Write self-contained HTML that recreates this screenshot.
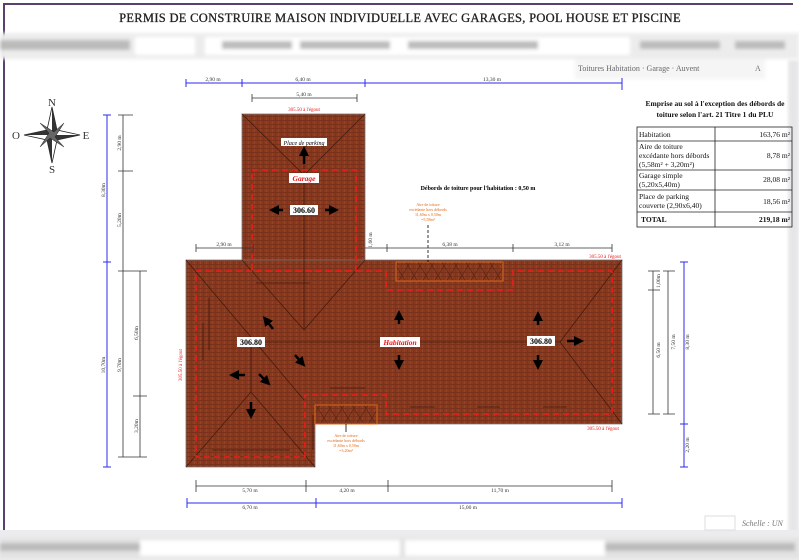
<!DOCTYPE html>
<html><head><meta charset="utf-8">
<style>
html,body{margin:0;padding:0;background:#fff;}
body{width:799px;height:560px;overflow:hidden;position:relative;font-family:"Liberation Serif",serif;}
svg{position:absolute;left:0;top:0;}
</style></head>
<body>
<svg width="799" height="560" viewBox="0 0 799 560" xmlns="http://www.w3.org/2000/svg" font-family="Liberation Serif, serif">
<defs>
<pattern id="tile" width="6" height="4" patternUnits="userSpaceOnUse">
<rect width="6" height="4" fill="#8a391d"/>
<rect x="0" y="0" width="6" height="0.8" fill="#73301a"/>
<rect x="2" y="1" width="0.8" height="3" fill="#98442a"/>
<rect x="5" y="1" width="0.8" height="3" fill="#7a331b"/>
</pattern>
<pattern id="hatch" width="12" height="19" patternUnits="userSpaceOnUse">
<path d="M0 0 L12 19 M12 0 L0 19" stroke="#5a2412" stroke-width="0.7"/>
</pattern>
<marker id="ah" markerWidth="4" markerHeight="4" refX="2" refY="2" orient="auto" markerUnits="strokeWidth">
<path d="M0 0 L4 2 L0 4 Z" fill="#000"/></marker>
<filter id="bl"><feGaussianBlur stdDeviation="1.8"/></filter>
</defs>

<rect x="0" y="0" width="799" height="560" fill="#fff"/>
<rect x="3" y="3" width="2" height="527" fill="#5d3f6e"/>
<rect x="3" y="3" width="790" height="2" fill="#5d3f6e"/>
<rect x="788" y="60" width="11" height="500" fill="#e6e6e8" filter="url(#bl)"/>
<rect x="0" y="530" width="799" height="30" fill="#ececee"/>

<text x="400" y="22" text-anchor="middle" font-size="12.5" fill="#222" stroke="#222" stroke-width="0.3" letter-spacing="0.3">PERMIS DE CONSTRUIRE MAISON INDIVIDUELLE AVEC GARAGES, POOL HOUSE ET PISCINE</text>

<g filter="url(#bl)">
<rect x="0" y="33" width="799" height="26" fill="#ececec"/>
<rect x="135" y="37" width="60" height="18" fill="#fff"/>
<rect x="205" y="37" width="365" height="18" fill="#fff"/>
<rect x="570" y="37" width="60" height="18" fill="#fff"/>
<rect x="0" y="40" width="130" height="10" fill="#bbb"/>
<rect x="222" y="41" width="70" height="8" fill="#bbb"/>
<rect x="300" y="41" width="90" height="8" fill="#bbb"/>
<rect x="408" y="41" width="130" height="8" fill="#bbb"/>
<rect x="640" y="41" width="80" height="8" fill="#bbb"/>
<rect x="735" y="41" width="50" height="8" fill="#bbb"/>
<rect x="575" y="59" width="190" height="20" fill="#f5f5f5"/>
<rect x="0" y="538" width="799" height="20" fill="#e2e2e2"/>
<rect x="140" y="540" width="260" height="16" fill="#fff"/>
<rect x="405" y="540" width="200" height="16" fill="#fff"/>
<rect x="0" y="543" width="140" height="8" fill="#bbb"/>
<rect x="605" y="543" width="190" height="8" fill="#bbb"/>
</g>
<text x="578" y="71" font-size="8" fill="#444" opacity="0.8">Toitures Habitation · Garage · Auvent</text>
<text x="755" y="71" font-size="8" fill="#777">A</text>
<text x="742" y="526" font-size="8" fill="#555" font-style="italic" opacity="0.8">Schelle : UN</text>
<rect x="705" y="516" width="30" height="14" fill="none" stroke="#ddd"/>

<g transform="translate(52,135)">
<path d="M0 -28 L5 -5 L28 0 L5 5 L0 28 L-5 5 L-28 0 L-5 -5 Z" fill="#fff" stroke="#222" stroke-width="0.8"/>
<path d="M0 -28 L5 -5 L0 0 Z M28 0 L5 5 L0 0 Z M0 28 L-5 5 L0 0Z M-28 0 L-5 -5 L0 0Z" fill="#333"/>
<path d="M-12 -12 L2 -3 L12 -12 L3 2 L12 12 L-2 3 L-12 12 L-3 -2 Z" fill="#666" stroke="#222" stroke-width="0.5"/>
<text x="0" y="-29" text-anchor="middle" font-size="11" fill="#333">N</text>
<text x="0" y="38" text-anchor="middle" font-size="11" fill="#333">S</text>
<text x="-36" y="4" text-anchor="middle" font-size="11" fill="#333">O</text>
<text x="34" y="4" text-anchor="middle" font-size="11" fill="#333">E</text>
</g>

<g stroke="#777" stroke-width="0.8" fill="url(#tile)">
<rect x="242" y="114" width="123" height="147"/>
<path d="M186 260 H622 V424 H315 V467 H186 Z"/>
</g>
<g stroke="#3a160a" stroke-width="0.8" fill="none" opacity="0.85">
<path d="M242 114 L304 175 L365 114"/>
<path d="M304 160 V330"/>
<path d="M242 260 L304 330 L365 260"/>
<path d="M186 260 L304 400 M186 467 L251 392 L315 467 M251 342 V392"/>
<path d="M251 342 H560 M560 342 L622 260 M560 342 L622 424"/>
<path d="M256 283 H310"/>
<path d="M203 323 V360 M209 298 V350 M313 415 V450"/>
<path d="M212 450 H290 M330 388 H365 M410 407 H435 M477 407 H500 M543 407 H567"/>
</g>
<rect x="396" y="262" width="107" height="19" fill="url(#hatch)" stroke="#e06a1a" stroke-width="1"/>
<rect x="315" y="405" width="62" height="19" fill="url(#hatch)" stroke="#e06a1a" stroke-width="1"/>
<g stroke="#ee1a1a" stroke-width="1.6" stroke-dasharray="6,4" fill="none">
<rect x="252" y="170" width="104" height="101"/>
<path d="M196 271 H386 V290 H513 V271 H612 V414 H386 V395 H305 V457 H196 Z"/>
</g>

<g font-size="8">
<rect x="281" y="138" width="46" height="8" fill="#fff"/>
<text x="304" y="145" text-anchor="middle" font-size="6" font-style="italic">Place de parking</text>
<rect x="289" y="173" width="30" height="10" fill="#fff"/>
<text x="304" y="181" text-anchor="middle" font-size="7.5" fill="#e8161a" font-weight="bold" font-style="italic">Garage</text>
<rect x="290" y="205" width="28" height="10" fill="#fff"/>
<text x="304" y="213" text-anchor="middle" font-weight="bold">306.60</text>
<rect x="237" y="337" width="28" height="10" fill="#fff"/>
<text x="251" y="345" text-anchor="middle" font-weight="bold">306.80</text>
<rect x="527" y="336" width="28" height="10" fill="#fff"/>
<text x="541" y="344" text-anchor="middle" font-weight="bold">306.80</text>
<rect x="380" y="337" width="40" height="10" fill="#fff"/>
<text x="400" y="345" text-anchor="middle" font-size="7.5" fill="#e8161a" font-weight="bold" font-style="italic">Habitation</text>
</g>
<g stroke="#000" stroke-width="2.5" marker-end="url(#ah)">
<path d="M304 164 V151"/>
<path d="M283 210 H274"/><path d="M325 210 H334"/>
<path d="M273 329 L266 320"/>
<path d="M295 355 L302 363"/>
<path d="M245 375 H234"/>
<path d="M259 374 L267 382"/>
<path d="M251 402 V414"/>
<path d="M399 324 V315"/><path d="M399 355 V365"/>
<path d="M538 325 V316"/><path d="M538 355 V365"/>
<path d="M567 341 H579"/>
</g>

<g fill="#e8161a" font-size="5">
<text x="304" y="111" text-anchor="middle">305.50 à l'égout</text>
<text x="605" y="258" text-anchor="middle">305.50 à l'égout</text>
<text x="603" y="430" text-anchor="middle">305.50 à l'égout</text>
<text transform="translate(182,365) rotate(-90)" text-anchor="middle">305.50 à l'égout</text>
</g>
<g fill="#e06a1a" font-size="4" text-anchor="middle">
<text x="428" y="206">Aire de toiture</text><text x="428" y="211">excédante hors débords</text><text x="428" y="216">11,60m x 0,50m</text><text x="428" y="221">=5,58m²</text>
<text x="346" y="437">Aire de toiture</text><text x="346" y="442">excédante hors débords</text><text x="346" y="447">11,60m x 0,50m</text><text x="346" y="452">=3,20m²</text>
</g>
<path d="M428 225 V262" stroke="#000" stroke-width="0.8" stroke-dasharray="3,2"/>
<path d="M346 424 V432" stroke="#000" stroke-width="0.8"/>
<text x="478" y="190" text-anchor="middle" font-size="6" font-weight="bold">Débords de toiture pour l'habitation : 0,50 m</text>

<g stroke="#2b2bf0" stroke-width="1" fill="none">
<path d="M186 83 H622 M186 79 V87 M242 79 V87 M365 79 V87 M622 78 V90"/>
<path d="M187 503 H622 M187 498 V508 M316 498 V508 M622 498 V508"/>
<path d="M107 115 V467 M103 115 H111 M103 262 H111 M103 467 H111"/>
<path d="M684 262 V467 M680 262 H688 M680 424 H688 M680 467 H688"/>
</g>
<g stroke="#333" stroke-width="0.8" fill="none">
<path d="M252 98 H357 M252 94 V102 M357 94 V102"/>
<path d="M196 486 H612 M196 480 V492 M306 480 V492 M388 480 V492 M612 480 V492"/>
<path d="M196 248 H253 M196 244 V252 M253 244 V252"/>
<path d="M365 248 H612 M387 244 V252 M513 244 V252 M612 244 V252"/>
<path d="M123 115 V457 M118 115 H133 M118 171 H133 M118 271 H133 M118 457 H133"/>
<path d="M140 271 V457 M133 271 H147 M133 396 H147 M133 457 H147"/>
<path d="M653 271 V414 M648 271 H660 M648 290 H660 M648 414 H660"/>
<path d="M668 271 V414 M663 271 H675 M663 414 H675"/>
</g>
<g font-size="5.5" fill="#333" text-anchor="middle">
<text x="213" y="81">2,90 m</text><text x="303" y="81">6,40 m</text><text x="492" y="81">13,30 m</text>
<text x="304" y="96">5,40 m</text>
<text x="224" y="246">2,90 m</text><text x="450" y="246">6,38 m</text><text x="562" y="246">3,12 m</text>
<text x="250" y="492">5,70 m</text><text x="347" y="492">4,20 m</text><text x="500" y="492">11,70 m</text>
<text x="250" y="509">6,70 m</text><text x="468" y="509">15,00 m</text>
<text transform="translate(105,190) rotate(-90)">8,30m</text>
<text transform="translate(105,365) rotate(-90)">10,70m</text>
<text transform="translate(121,143) rotate(-90)">2,90 m</text>
<text transform="translate(121,220) rotate(-90)">5,20m</text>
<text transform="translate(121,365) rotate(-90)">9,70m</text>
<text transform="translate(138,333) rotate(-90)">6,50m</text>
<text transform="translate(138,426) rotate(-90)">3,20m</text>
<text transform="translate(372,240) rotate(-90)">1,60 m</text>
<text transform="translate(660,281) rotate(-90)">1,00m</text>
<text transform="translate(660,350) rotate(-90)">6,50 m</text>
<text transform="translate(675,342) rotate(-90)">7,50 m</text>
<text transform="translate(689,342) rotate(-90)">8,30 m</text>
<text transform="translate(689,445) rotate(-90)">2,20 m</text>
</g>

<g font-size="7.5" fill="#111">
<text x="715" y="106" text-anchor="middle" font-weight="bold">Emprise au sol à l'exception des débords de</text>
<text x="715" y="117" text-anchor="middle" font-weight="bold">toiture selon l'art. 21 Titre 1 du PLU</text>
<g stroke="#222" stroke-width="0.8" fill="none">
<rect x="637" y="127" width="155" height="100"/>
<path d="M637 141 H792 M637 170 H792 M637 190 H792 M637 212 H792 M715 127 V227"/>
</g>
<text x="639" y="137">Habitation</text><text x="790" y="137" text-anchor="end">163,76 m²</text>
<text x="639" y="149">Aire de toiture</text><text x="639" y="158">excédante hors débords</text><text x="639" y="167">(5,58m² + 3,20m²)</text><text x="790" y="158" text-anchor="end">8,78 m²</text>
<text x="639" y="178">Garage simple</text><text x="639" y="187">(5,20x5,40m)</text><text x="790" y="182" text-anchor="end">28,08 m²</text>
<text x="639" y="199">Place de parking</text><text x="639" y="208">couverte (2,90x6,40)</text><text x="790" y="204" text-anchor="end">18,56 m²</text>
<text x="641" y="222" font-weight="bold">TOTAL</text><text x="790" y="222" text-anchor="end" font-weight="bold">219,18 m²</text>
</g>
</svg>
</body></html>
